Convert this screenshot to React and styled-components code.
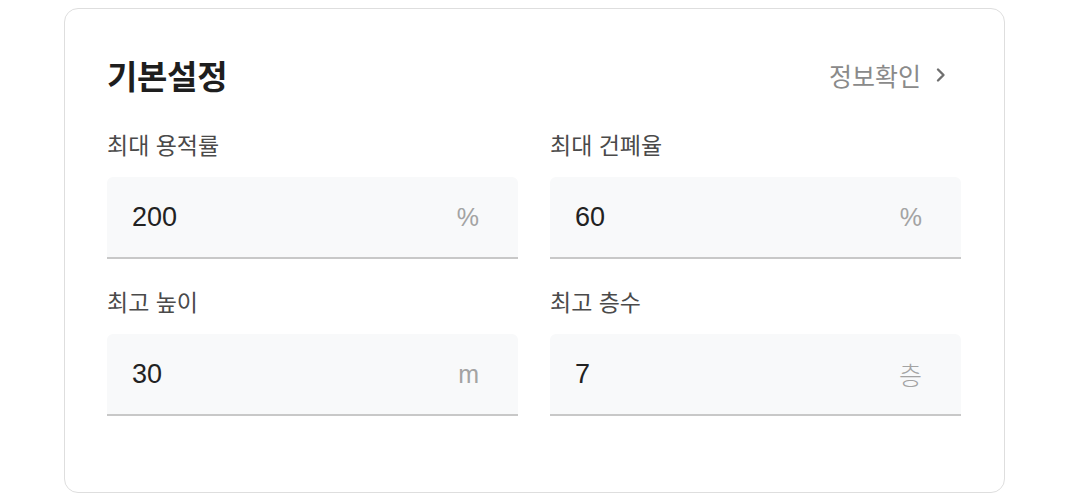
import React from "react";
import styled, { createGlobalStyle } from "styled-components";

const GlobalStyle = createGlobalStyle`
  body {
    margin: 0;
    background: #ffffff;
    font-family: "Liberation Sans", "Noto Sans CJK KR", sans-serif;
  }
`;

const fields = [
  { label: "최대 용적률", value: "200", unit: "%" },
  { label: "최대 건폐율", value: "60", unit: "%" },
  { label: "최고 높이", value: "30", unit: "m" },
  { label: "최고 층수", value: "7", unit: "층" },
];

const ChevronRight = () => (
  <svg width="12" height="16" viewBox="0 0 12 16" fill="none">
    <path
      d="M3 2.5 L8.5 8 L3 13.5"
      stroke="#6f6f6f"
      strokeWidth="2.4"
      strokeLinecap="round"
      strokeLinejoin="round"
    />
  </svg>
);

export default function App() {
  return (
    <>
      <GlobalStyle />
      <Card>
        <Header>
          <Title>기본설정</Title>
          <InfoLink>
            정보확인
            <ChevronRight />
          </InfoLink>
        </Header>
        <Grid>
          {fields.map((f) => (
            <Field key={f.label}>
              <Label>{f.label}</Label>
              <InputBox>
                <Value>{f.value}</Value>
                <Unit>{f.unit}</Unit>
              </InputBox>
            </Field>
          ))}
        </Grid>
      </Card>
    </>
  );
}

const Card = styled.div`
  box-sizing: border-box;
  width: 941px;
  height: 485px;
  margin: 8px 0 0 64px;
  padding: 46px 43px 0 42px;
  border: 1px solid #dedede;
  border-radius: 14px;
  background: #ffffff;
`;

const Header = styled.div`
  display: flex;
  align-items: center;
  justify-content: space-between;
  height: 40px;
`;

const Title = styled.h2`
  margin: 0;
  font-size: 33px;
  font-weight: 700;
  color: #1e1e1e;
  letter-spacing: -0.3px;
`;

const InfoLink = styled.a`
  display: flex;
  align-items: center;
  gap: 14px;
  margin-right: 14px;
  font-size: 25px;
  color: #8a8a8a;
  cursor: pointer;
`;

const Grid = styled.div`
  display: grid;
  grid-template-columns: 1fr 1fr;
  column-gap: 32px;
  row-gap: 30px;
  margin-top: 37px;
`;

const Field = styled.div`
  display: flex;
  flex-direction: column;
`;

const Label = styled.div`
  font-size: 23px;
  line-height: 28px;
  color: #4a4a4a;
  margin-bottom: 17px;
`;

const InputBox = styled.div`
  box-sizing: border-box;
  display: flex;
  align-items: center;
  justify-content: space-between;
  height: 82px;
  padding: 0 39px 0 25px;
  background: #f8f9fa;
  border-bottom: 2px solid #c8c8c8;
  border-radius: 6px 6px 0 0;
`;

const Value = styled.span`
  font-size: 27px;
  color: #222222;
`;

const Unit = styled.span`
  font-size: 25px;
  font-weight: 300;
  color: #a3a3a3;
`;
